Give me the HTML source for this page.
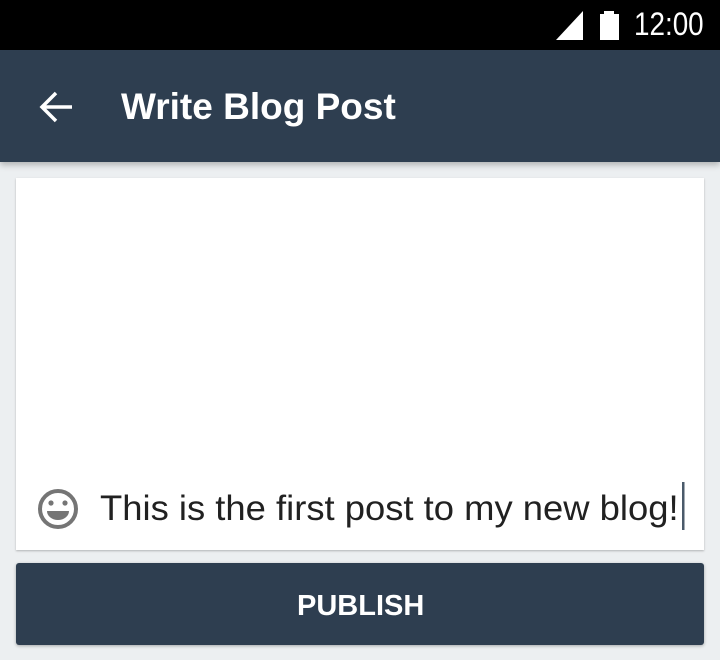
<!DOCTYPE html>
<html><head><meta charset="utf-8"><style>
*{margin:0;padding:0;box-sizing:border-box}
body{width:720px;height:660px;background:#eceff1;font-family:"Liberation Sans",sans-serif;position:relative;overflow:hidden}
.status{position:absolute;left:0;top:0;width:720px;height:50px;background:#000}
.bar{position:absolute;left:0;top:50px;width:720px;height:112px;background:#2e3e50;box-shadow:0 3px 6px rgba(0,0,0,.25)}
.t{position:absolute;white-space:nowrap;transform-origin:left top}
.card{position:absolute;left:16px;top:178px;width:688px;height:372px;background:#fff;box-shadow:0 1px 2px rgba(0,0,0,.25)}
.btn{position:absolute;left:16px;top:563px;width:688px;height:82px;background:#2e3e50;border-radius:3px;box-shadow:0 1px 3px rgba(0,0,0,.3)}
</style></head><body>
<div class="status">
<svg style="position:absolute;left:0;top:0" width="720" height="50">
<polygon points="556,40 583,40 583,11" fill="#fff"/>
<rect x="604" y="11" width="10" height="5" fill="#fff"/>
<rect x="600" y="14" width="19" height="26" fill="#fff"/>
</svg>
<div class="t" style="left:634px;top:6px;font-size:32px;color:#fff;transform:scaleX(0.87)">12:00</div>
</div>
<div class="bar">
<svg style="position:absolute;left:0;top:0" width="120" height="112">
<path d="M72 57 H42 M56 43 L42 57 L56 71" stroke="#fff" stroke-width="3.5" fill="none"/>
</svg>
<div class="t" style="left:121px;top:36px;font-size:37px;font-weight:bold;color:#fff">Write Blog Post</div>
</div>
<div class="card"></div>
<svg style="position:absolute;left:0;top:0" width="720" height="660">
<circle cx="58" cy="509" r="18" stroke="#757575" stroke-width="4" fill="none"/>
<circle cx="51" cy="503" r="2.6" fill="#757575"/>
<circle cx="65" cy="503" r="2.6" fill="#757575"/>
<path d="M47 511 H69 A11 9 0 0 1 47 511 Z" fill="#757575"/>
<rect x="682" y="482" width="2.5" height="48" fill="#4a5a6a"/>
</svg>
<div class="t" style="left:100px;top:489px;font-size:35px;color:#212121;transform:scaleX(1.04)">This is the first post to my new blog!</div>
<div class="btn"></div>
<div class="t" style="left:297px;top:590px;font-size:29px;font-weight:bold;color:#fff">PUBLISH</div>
</body></html>
